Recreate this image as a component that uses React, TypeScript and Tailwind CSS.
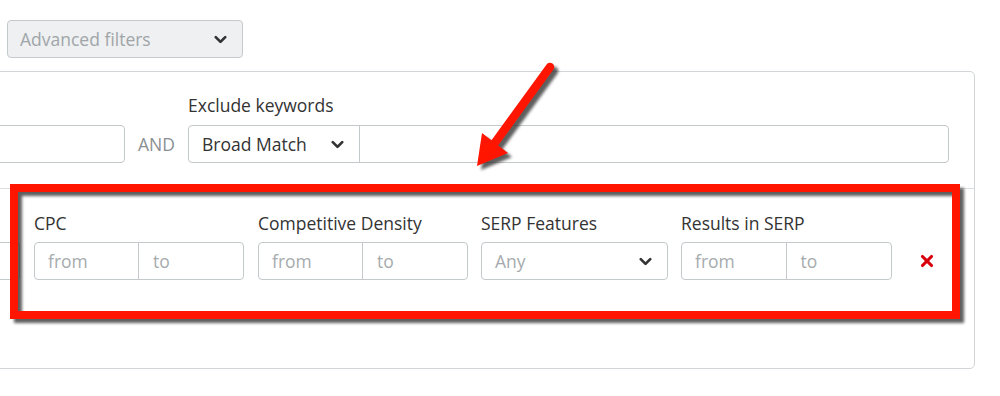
import React from 'react';
import { ChevronDown, X } from 'lucide-react';

const RangeInput: React.FC<{ className?: string }> = ({ className = '' }) => (
  <div className={`flex h-[38px] border border-[#c4c9cc] rounded-[4px] bg-white ${className}`}>
    <input
      placeholder="from"
      className="w-1/2 min-w-0 pl-[13px] text-[17.5px] text-[#333] placeholder:text-[#a6abae] outline-none bg-transparent border-r border-[#c4c9cc]"
    />
    <input
      placeholder="to"
      className="w-1/2 min-w-0 pl-[14px] text-[17.5px] text-[#333] placeholder:text-[#a6abae] outline-none bg-transparent"
    />
  </div>
);

const Field: React.FC<{ label: string; className?: string; children: React.ReactNode }> = ({
  label,
  className = '',
  children,
}) => (
  <div className={`flex flex-col ${className}`}>
    <label className="h-[20px] leading-[20px] mb-[9px] text-[17.5px] text-[#333] whitespace-nowrap">{label}</label>
    {children}
  </div>
);

const App: React.FC = () => {
  return (
    <div
      className="relative w-[1000px] h-[396px] bg-white overflow-hidden"
      style={{ fontFamily: '"Open Sans", "Noto Sans", sans-serif' }}
    >
      {/* Advanced filters toggle */}
      <div className="pt-[20px] pl-[7px]">
        <button className="flex items-center justify-between w-[236px] h-[38px] pl-[12px] pr-[12px] bg-[#eef0f1] border border-[#c5cacd] rounded-[4px] text-[17.5px] text-[#a0a5a9]">
          <span>Advanced filters</span>
          <ChevronDown className="w-[19px] h-[19px] text-[#333]" strokeWidth={3.4} />
        </button>
      </div>

      {/* Filters panel */}
      <div className="mt-[13px] -ml-[120px] w-[1095px] h-[298px] border border-[#d2d6d8] rounded-[5px]">
        {/* Keywords row */}
        <div className="pt-[23px] pb-[25px] pl-[20px] pr-[25px] border-b border-[#dcdfe1] flex items-end">
          <div className="w-[224px] h-[38px] border border-[#c4c9cc] rounded-[4px]" />
          <div className="w-[63px] h-[38px] flex items-center justify-center text-[17.5px] text-[#8a8f93]">AND</div>
          <div className="flex-1 flex flex-col">
            <label className="h-[20px] leading-[20px] mb-[10px] text-[17.5px] text-[#333]">Exclude keywords</label>
            <div className="flex h-[38px] border border-[#c4c9cc] rounded-[4px]">
              <div className="w-[171px] flex items-center justify-between pl-[13px] pr-[12px] border-r border-[#c4c9cc] text-[17.5px] text-[#333]">
                <span>Broad Match</span>
                <ChevronDown className="w-[19px] h-[19px] text-[#333]" strokeWidth={3.4} />
              </div>
              <input className="flex-1 min-w-0 outline-none px-3 text-[17.5px]" />
            </div>
          </div>
        </div>

        {/* Metrics row */}
        <div className="pt-[24px] pl-[20px] flex items-end">
          <div className="w-[119px] h-[38px] border border-[#c4c9cc] rounded-[4px]" />
          <Field label="CPC" className="ml-[14px] w-[210px]">
            <RangeInput />
          </Field>
          <Field label="Competitive Density" className="ml-[14px] w-[210px]">
            <RangeInput />
          </Field>
          <Field label="SERP Features" className="ml-[13px] w-[187px]">
            <div className="flex items-center justify-between h-[38px] pl-[13px] pr-[12px] border border-[#c4c9cc] rounded-[4px] text-[17.5px] text-[#a6abae]">
              <span>Any</span>
              <ChevronDown className="w-[19px] h-[19px] text-[#333]" strokeWidth={3.4} />
            </div>
          </Field>
          <Field label="Results in SERP" className="ml-[13px] w-[211px]">
            <RangeInput />
          </Field>
          <div className="h-[38px] ml-[26px] flex items-center">
            <X className="w-[18px] h-[18px] text-[#d9000d]" strokeWidth={4.2} />
          </div>
        </div>
      </div>

      {/* Annotation: red highlight box */}
      <div className="absolute left-[10px] top-[184px] w-[950px] h-[135px] border-[8px] border-[#ff1500] [filter:drop-shadow(4px_4px_1.5px_rgba(40,40,40,0.75))] pointer-events-none" />

      {/* Annotation: arrow */}
      <svg
        className="absolute left-0 top-0 pointer-events-none [filter:drop-shadow(4px_4px_1.5px_rgba(40,40,40,0.75))]"
        width="1000"
        height="396"
        viewBox="0 0 1000 396"
      >
        <line x1="550" y1="67" x2="494" y2="144" stroke="#ff1500" strokeWidth="8.5" strokeLinecap="round" />
        <polygon points="477,166 482,133 508,153" fill="#ff1500" />
      </svg>
    </div>
  );
};

export default App;
